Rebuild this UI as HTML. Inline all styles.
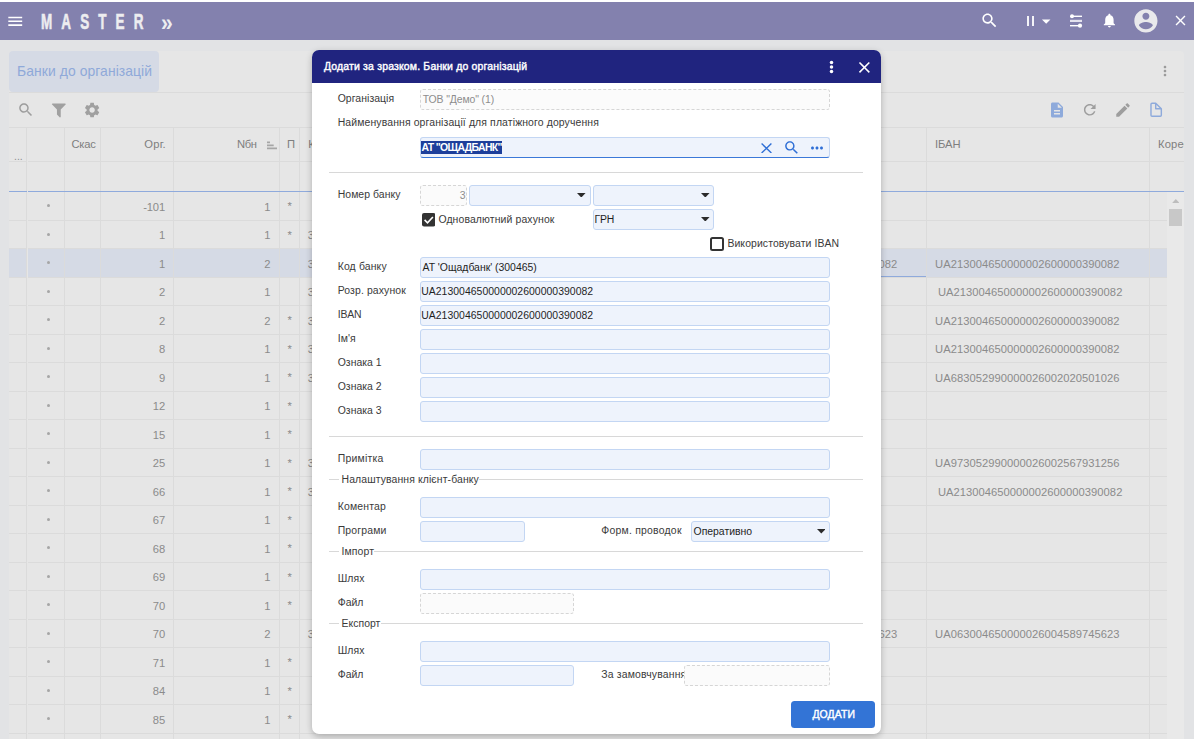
<!DOCTYPE html>
<html lang="uk"><head><meta charset="utf-8"><title>Банки до організацій</title>
<style>
html,body{margin:0;padding:0}
body{width:1194px;height:739px;overflow:hidden;position:relative;background:#e2e3e5;font-family:"Liberation Sans", sans-serif;}

.f{position:absolute;box-sizing:border-box;background:#eef3fc;border:1px solid #c3d6f3;border-radius:3px}
.ro{position:absolute;box-sizing:border-box;background:#fbfbfb;border:1px dashed #d6d6d6;border-radius:3px}
.hl{position:absolute;height:1px;background:#dbdbdb}
.vl{position:absolute;width:1px;background:#dbdbdb}

</style></head>
<body>
<div style="position:absolute;left:0.00px;top:0.00px;width:1194.00px;height:2.00px;background:#fff"></div>
<div style="position:absolute;left:0.00px;top:2.00px;width:1194.00px;height:38.00px;background:#8381ae"></div>
<svg style="position:absolute;left:5.75px;top:12.05px" width="18.50" height="18.50" viewBox="0 0 24 24"><path fill="#fff" d="M3 18h18v-2H3v2zm0-5h18v-2H3v2zm0-7v2h18V6H3z"/></svg>
<div style="position:absolute;top:5.85px;font-size:22.5px;line-height:31.5px;height:31.5px;color:#ededf0;white-space:pre;font-weight:700;left:41.10px;transform-origin:0 50%;transform:scaleX(.6);letter-spacing:15.14px;-webkit-text-stroke:.6px #ededf0;">MASTER</div>
<div style="position:absolute;top:5.60px;font-size:24px;line-height:33.6px;height:33.6px;color:#ededf0;white-space:pre;font-weight:700;left:161.20px;transform-origin:0 50%;transform:scaleX(.88);">»</div>
<svg style="position:absolute;left:979.70px;top:11.10px" width="19.00" height="19.00" viewBox="0 0 24 24"><path fill="#fff" d="M15.5 14h-.79l-.28-.27C15.41 12.59 16 11.11 16 9.5 16 5.91 13.09 3 9.5 3S3 5.91 3 9.5 5.91 16 9.5 16c1.61 0 3.09-.59 4.23-1.57l.27.28v.79l5 4.99L20.49 19l-4.99-5zm-6 0C7.01 14 5 11.99 5 9.5S7.01 5 9.5 5 14 7.01 14 9.5 11.99 14 9.5 14z"/></svg>
<div style="position:absolute;left:1026.50px;top:16.00px;width:2.50px;height:10.00px;background:#f4f4f8"></div>
<div style="position:absolute;left:1031.80px;top:16.00px;width:2.50px;height:10.00px;background:#f4f4f8"></div>
<svg style="position:absolute;left:1035.80px;top:11.30px" width="20.40" height="20.40" viewBox="0 0 24 24"><path fill="#fff" d="M7 10l5 5 5-5z"/></svg>
<svg style="position:absolute;left:1069px;top:13px" width="15" height="16" viewBox="0 0 15 16"><path fill="#fff" d="M3 2.6h10v1.4H3z"/><path fill="#e3e2ee" d="M1 6.8h12v2.2H1z"/><path fill="#fff" d="M1 12h10v1.4H1z"/><circle cx="3" cy="3.3" r="2" fill="#fff"/><circle cx="11" cy="12.7" r="2.1" fill="#fff"/></svg>
<svg style="position:absolute;left:1101.00px;top:11.90px" width="16.80" height="16.80" viewBox="0 0 24 24"><path fill="#fff" d="M12 22c1.1 0 2-.9 2-2h-4c0 1.1.89 2 2 2zm6-6v-5c0-3.07-1.64-5.64-4.5-6.32V4c0-.83-.67-1.5-1.5-1.5s-1.5.67-1.5 1.5v.68C7.63 5.36 6 7.92 6 11v5l-2 2v1h16v-1l-2-2z"/></svg>
<svg style="position:absolute;left:1131.60px;top:6.50px" width="27.80" height="27.80" viewBox="0 0 24 24"><path fill="#e9e9ec" d="M12 2C6.48 2 2 6.48 2 12s4.48 10 10 10 10-4.48 10-10S17.52 2 12 2zm0 3c1.66 0 3 1.34 3 3s-1.34 3-3 3-3-1.34-3-3 1.34-3 3-3zm0 14.2c-2.5 0-4.71-1.28-6-3.22.03-1.99 4-3.08 6-3.08 1.99 0 5.97 1.09 6 3.08-1.29 1.94-3.5 3.22-6 3.22z"/></svg>
<svg style="position:absolute;left:1171.50px;top:11.60px" width="17.00" height="17.00" viewBox="0 0 24 24"><path fill="#fff" d="M19 6.41L17.59 5 12 10.59 6.41 5 5 6.41 10.59 12 5 17.59 6.41 19 12 13.41 17.59 19 19 17.59 13.41 12z"/></svg>
<div style="position:absolute;left:9.00px;top:51.00px;width:1175.00px;height:688.00px;background:#e6e6e6;border-radius:4px 4px 0 0"></div>
<div style="position:absolute;left:9.00px;top:51.00px;width:149.70px;height:40.70px;background:#d5dae5;border-radius:4px"></div>
<div style="position:absolute;top:61.77px;font-size:13.9px;line-height:19.46px;height:19.46px;color:#8fa9d9;white-space:pre;letter-spacing:0.075px;left:17.10px;">Банки до організацій</div>
<svg style="position:absolute;left:1157.00px;top:63.00px" width="16.00" height="16.00" viewBox="0 0 24 24"><path fill="#9a9a9a" d="M12 8c1.1 0 2-.9 2-2s-.9-2-2-2-2 .9-2 2 .9 2 2 2zm0 2c-1.1 0-2 .9-2 2s.9 2 2 2 2-.9 2-2-.9-2-2-2zm0 6c-1.1 0-2 .9-2 2s.9 2 2 2 2-.9 2-2-.9-2-2-2z"/></svg>
<div class="hl" style="left:9px;top:91.6px;width:1175px"></div>
<svg style="position:absolute;left:16.90px;top:100.70px" width="17.60" height="17.60" viewBox="0 0 24 24"><path fill="#9e9e9e" d="M15.5 14h-.79l-.28-.27C15.41 12.59 16 11.11 16 9.5 16 5.91 13.09 3 9.5 3S3 5.91 3 9.5 5.91 16 9.5 16c1.61 0 3.09-.59 4.23-1.57l.27.28v.79l5 4.99L20.49 19l-4.99-5zm-6 0C7.01 14 5 11.99 5 9.5S7.01 5 9.5 5 14 7.01 14 9.5 11.99 14 9.5 14z"/></svg>
<svg style="position:absolute;left:50.1px;top:100.6px" width="17.7" height="17.7" viewBox="0 0 1792 1792"><path fill="#a0a0a0" d="M1595 295q17 41-14 70l-493 493v742q0 42-39 59-13 5-25 5-27 0-45-19l-256-256q-19-19-19-45v-486l-493-493q-31-29-14-70 17-39 59-39h1280q42 0 59 39z"/></svg>
<svg style="position:absolute;left:82.75px;top:100.80px" width="18.20" height="18.20" viewBox="0 0 24 24"><path fill="#a0a0a0" d="M19.14 12.94c.04-.3.06-.61.06-.94 0-.32-.02-.64-.07-.94l2.03-1.58c.18-.14.23-.41.12-.61l-1.92-3.32c-.12-.22-.37-.29-.59-.22l-2.39.96c-.5-.38-1.03-.7-1.62-.94l-.36-2.54c-.04-.24-.24-.41-.48-.41h-3.84c-.24 0-.43.17-.47.41l-.36 2.54c-.59.24-1.13.57-1.62.94l-2.39-.96c-.22-.08-.47 0-.59.22L2.74 8.87c-.12.21-.08.47.12.61l2.03 1.58c-.05.3-.09.63-.09.94s.02.64.07.94l-2.03 1.58c-.18.14-.23.41-.12.61l1.92 3.32c.12.22.37.29.59.22l2.39-.96c.5.38 1.03.7 1.62.94l.36 2.54c.05.24.24.41.48.41h3.84c.24 0 .44-.17.47-.41l.36-2.54c.59-.24 1.13-.56 1.62-.94l2.39.96c.22.08.47 0 .59-.22l1.92-3.32c.12-.22.07-.47-.12-.61l-2.01-1.58zM12 15.6c-1.98 0-3.6-1.62-3.6-3.6s1.62-3.6 3.6-3.6 3.6 1.62 3.6 3.6-1.62 3.6-3.6 3.6z"/></svg>
<svg style="position:absolute;left:1048.00px;top:101.00px" width="18.00" height="18.00" viewBox="0 0 24 24"><path fill="#8eaadb" d="M14 2H6c-1.1 0-1.99.9-1.99 2L4 20c0 1.1.89 2 1.99 2H18c1.1 0 2-.9 2-2V8l-6-6zm2 16H8v-2h8v2zm0-4H8v-2h8v2zm-3-5V3.5L18.5 9H13z"/></svg>
<svg style="position:absolute;left:1081.25px;top:101.25px" width="17.50" height="17.50" viewBox="0 0 24 24"><path fill="#9e9e9e" d="M17.65 6.35C16.2 4.9 14.21 4 12 4c-4.42 0-7.99 3.58-7.99 8s3.57 8 7.99 8c3.73 0 6.84-2.55 7.73-6h-2.08c-.82 2.33-3.04 4-5.65 4-3.31 0-6-2.69-6-6s2.69-6 6-6c1.66 0 3.14.69 4.22 1.78L13 11h7V4l-2.35 2.35z"/></svg>
<svg style="position:absolute;left:1114.00px;top:101.00px" width="18.00" height="18.00" viewBox="0 0 24 24"><path fill="#9e9e9e" d="M3 17.25V21h3.75L17.81 9.94l-3.75-3.75L3 17.25zM20.71 7.04c.39-.39.39-1.02 0-1.41l-2.34-2.34c-.39-.39-1.02-.39-1.41 0l-1.83 1.83 3.75 3.75 1.83-1.83z"/></svg>
<svg style="position:absolute;left:1147px;top:101px" width="18" height="18" viewBox="0 0 24 24" fill="none" stroke="#8eaadb" stroke-width="1.9" stroke-linejoin="round"><path d="M11.600 2.900H6.700a1.400 1.400 0 0 0-1.400 1.400v14.700a1.400 1.400 0 0 0 1.400 1.400h11a1.400 1.400 0 0 0 1.400-1.400V10.300zM11.600 2.900v7.400h7.500"/></svg>
<div class="hl" style="left:9px;top:127px;width:1175px"></div>
<div class="hl" style="left:9px;top:161px;width:1175px"></div>
<div style="position:absolute;left:9.00px;top:248.00px;width:1157.50px;height:29.00px;background:#d5dae5"></div>
<div class="hl" style="left:9px;top:219.90px;width:1157.5px"></div>
<div style="position:absolute;left:46.90px;top:204.00px;width:3.20px;height:3.20px;background:#a6a6a6;border-radius:50%"></div>
<div style="position:absolute;top:199.86px;font-size:11.2px;line-height:15.68px;height:15.68px;color:#8b8b8b;white-space:pre;letter-spacing:-0.109px;right:1028.91px;">-101</div>
<div style="position:absolute;top:199.86px;font-size:11.2px;line-height:15.68px;height:15.68px;color:#8b8b8b;white-space:pre;right:923.60px;">1</div>
<div style="position:absolute;top:199.46px;font-size:11.2px;line-height:15.68px;height:15.68px;color:#8b8b8b;white-space:pre;left:287.40px;">*</div>
<div class="hl" style="left:9px;top:248.40px;width:1157.5px"></div>
<div style="position:absolute;left:46.90px;top:232.50px;width:3.20px;height:3.20px;background:#a6a6a6;border-radius:50%"></div>
<div style="position:absolute;top:228.36px;font-size:11.2px;line-height:15.68px;height:15.68px;color:#8b8b8b;white-space:pre;right:1028.80px;">1</div>
<div style="position:absolute;top:228.36px;font-size:11.2px;line-height:15.68px;height:15.68px;color:#8b8b8b;white-space:pre;right:923.60px;">1</div>
<div style="position:absolute;top:227.96px;font-size:11.2px;line-height:15.68px;height:15.68px;color:#8b8b8b;white-space:pre;left:287.40px;">*</div>
<div style="position:absolute;top:228.36px;font-size:11.2px;line-height:15.68px;height:15.68px;color:#8b8b8b;white-space:pre;letter-spacing:0.065px;left:307.80px;">300465</div>
<div class="hl" style="left:9px;top:276.90px;width:1157.5px"></div>
<div style="position:absolute;left:46.90px;top:261.00px;width:3.20px;height:3.20px;background:#a6a6a6;border-radius:50%"></div>
<div style="position:absolute;top:256.86px;font-size:11.2px;line-height:15.68px;height:15.68px;color:#8b8b8b;white-space:pre;right:1028.80px;">1</div>
<div style="position:absolute;top:256.86px;font-size:11.2px;line-height:15.68px;height:15.68px;color:#8b8b8b;white-space:pre;right:923.60px;">2</div>
<div style="position:absolute;top:256.86px;font-size:11.2px;line-height:15.68px;height:15.68px;color:#8b8b8b;white-space:pre;letter-spacing:0.065px;left:307.80px;">300465</div>
<div style="position:absolute;top:256.86px;font-size:11.2px;line-height:15.68px;height:15.68px;color:#8b8b8b;white-space:pre;letter-spacing:0.033px;left:935.10px;">UA213004650000002600000390082</div>
<div style="position:absolute;top:256.86px;font-size:11.2px;line-height:15.68px;height:15.68px;color:#8b8b8b;white-space:pre;letter-spacing:0.065px;right:296.73px;">213004650000002600000390082</div>
<div class="hl" style="left:9px;top:305.40px;width:1157.5px"></div>
<div style="position:absolute;left:46.90px;top:289.50px;width:3.20px;height:3.20px;background:#a6a6a6;border-radius:50%"></div>
<div style="position:absolute;top:285.36px;font-size:11.2px;line-height:15.68px;height:15.68px;color:#8b8b8b;white-space:pre;right:1028.80px;">2</div>
<div style="position:absolute;top:285.36px;font-size:11.2px;line-height:15.68px;height:15.68px;color:#8b8b8b;white-space:pre;right:923.60px;">1</div>
<div style="position:absolute;top:285.36px;font-size:11.2px;line-height:15.68px;height:15.68px;color:#8b8b8b;white-space:pre;letter-spacing:0.065px;left:307.80px;">300465</div>
<div style="position:absolute;top:285.36px;font-size:11.2px;line-height:15.68px;height:15.68px;color:#8b8b8b;white-space:pre;letter-spacing:0.033px;left:937.90px;">UA213004650000002600000390082</div>
<div class="hl" style="left:9px;top:333.90px;width:1157.5px"></div>
<div style="position:absolute;left:46.90px;top:318.00px;width:3.20px;height:3.20px;background:#a6a6a6;border-radius:50%"></div>
<div style="position:absolute;top:313.86px;font-size:11.2px;line-height:15.68px;height:15.68px;color:#8b8b8b;white-space:pre;right:1028.80px;">2</div>
<div style="position:absolute;top:313.86px;font-size:11.2px;line-height:15.68px;height:15.68px;color:#8b8b8b;white-space:pre;right:923.60px;">2</div>
<div style="position:absolute;top:313.46px;font-size:11.2px;line-height:15.68px;height:15.68px;color:#8b8b8b;white-space:pre;left:287.40px;">*</div>
<div style="position:absolute;top:313.86px;font-size:11.2px;line-height:15.68px;height:15.68px;color:#8b8b8b;white-space:pre;letter-spacing:0.065px;left:307.80px;">300465</div>
<div style="position:absolute;top:313.86px;font-size:11.2px;line-height:15.68px;height:15.68px;color:#8b8b8b;white-space:pre;letter-spacing:0.033px;left:935.10px;">UA213004650000002600000390082</div>
<div class="hl" style="left:9px;top:362.40px;width:1157.5px"></div>
<div style="position:absolute;left:46.90px;top:346.50px;width:3.20px;height:3.20px;background:#a6a6a6;border-radius:50%"></div>
<div style="position:absolute;top:342.36px;font-size:11.2px;line-height:15.68px;height:15.68px;color:#8b8b8b;white-space:pre;right:1028.80px;">8</div>
<div style="position:absolute;top:342.36px;font-size:11.2px;line-height:15.68px;height:15.68px;color:#8b8b8b;white-space:pre;right:923.60px;">1</div>
<div style="position:absolute;top:341.96px;font-size:11.2px;line-height:15.68px;height:15.68px;color:#8b8b8b;white-space:pre;left:287.40px;">*</div>
<div style="position:absolute;top:342.36px;font-size:11.2px;line-height:15.68px;height:15.68px;color:#8b8b8b;white-space:pre;letter-spacing:0.065px;left:307.80px;">300465</div>
<div style="position:absolute;top:342.36px;font-size:11.2px;line-height:15.68px;height:15.68px;color:#8b8b8b;white-space:pre;letter-spacing:0.033px;left:935.10px;">UA213004650000002600000390082</div>
<div class="hl" style="left:9px;top:390.90px;width:1157.5px"></div>
<div style="position:absolute;left:46.90px;top:375.00px;width:3.20px;height:3.20px;background:#a6a6a6;border-radius:50%"></div>
<div style="position:absolute;top:370.86px;font-size:11.2px;line-height:15.68px;height:15.68px;color:#8b8b8b;white-space:pre;right:1028.80px;">9</div>
<div style="position:absolute;top:370.86px;font-size:11.2px;line-height:15.68px;height:15.68px;color:#8b8b8b;white-space:pre;right:923.60px;">1</div>
<div style="position:absolute;top:370.46px;font-size:11.2px;line-height:15.68px;height:15.68px;color:#8b8b8b;white-space:pre;left:287.40px;">*</div>
<div style="position:absolute;top:370.86px;font-size:11.2px;line-height:15.68px;height:15.68px;color:#8b8b8b;white-space:pre;letter-spacing:0.065px;left:307.80px;">305299</div>
<div style="position:absolute;top:370.86px;font-size:11.2px;line-height:15.68px;height:15.68px;color:#8b8b8b;white-space:pre;letter-spacing:0.033px;left:935.10px;">UA683052990000026002020501026</div>
<div class="hl" style="left:9px;top:419.40px;width:1157.5px"></div>
<div style="position:absolute;left:46.90px;top:403.50px;width:3.20px;height:3.20px;background:#a6a6a6;border-radius:50%"></div>
<div style="position:absolute;top:399.36px;font-size:11.2px;line-height:15.68px;height:15.68px;color:#8b8b8b;white-space:pre;letter-spacing:0.062px;right:1028.74px;">12</div>
<div style="position:absolute;top:399.36px;font-size:11.2px;line-height:15.68px;height:15.68px;color:#8b8b8b;white-space:pre;right:923.60px;">1</div>
<div style="position:absolute;top:398.96px;font-size:11.2px;line-height:15.68px;height:15.68px;color:#8b8b8b;white-space:pre;left:287.40px;">*</div>
<div class="hl" style="left:9px;top:447.90px;width:1157.5px"></div>
<div style="position:absolute;left:46.90px;top:432.00px;width:3.20px;height:3.20px;background:#a6a6a6;border-radius:50%"></div>
<div style="position:absolute;top:427.86px;font-size:11.2px;line-height:15.68px;height:15.68px;color:#8b8b8b;white-space:pre;letter-spacing:0.062px;right:1028.74px;">15</div>
<div style="position:absolute;top:427.86px;font-size:11.2px;line-height:15.68px;height:15.68px;color:#8b8b8b;white-space:pre;right:923.60px;">1</div>
<div style="position:absolute;top:427.46px;font-size:11.2px;line-height:15.68px;height:15.68px;color:#8b8b8b;white-space:pre;left:287.40px;">*</div>
<div class="hl" style="left:9px;top:476.40px;width:1157.5px"></div>
<div style="position:absolute;left:46.90px;top:460.50px;width:3.20px;height:3.20px;background:#a6a6a6;border-radius:50%"></div>
<div style="position:absolute;top:456.36px;font-size:11.2px;line-height:15.68px;height:15.68px;color:#8b8b8b;white-space:pre;letter-spacing:0.062px;right:1028.74px;">25</div>
<div style="position:absolute;top:456.36px;font-size:11.2px;line-height:15.68px;height:15.68px;color:#8b8b8b;white-space:pre;right:923.60px;">1</div>
<div style="position:absolute;top:455.96px;font-size:11.2px;line-height:15.68px;height:15.68px;color:#8b8b8b;white-space:pre;left:287.40px;">*</div>
<div style="position:absolute;top:456.36px;font-size:11.2px;line-height:15.68px;height:15.68px;color:#8b8b8b;white-space:pre;letter-spacing:0.065px;left:307.80px;">305299</div>
<div style="position:absolute;top:456.36px;font-size:11.2px;line-height:15.68px;height:15.68px;color:#8b8b8b;white-space:pre;letter-spacing:0.033px;left:935.10px;">UA973052990000026002567931256</div>
<div class="hl" style="left:9px;top:504.90px;width:1157.5px"></div>
<div style="position:absolute;left:46.90px;top:489.00px;width:3.20px;height:3.20px;background:#a6a6a6;border-radius:50%"></div>
<div style="position:absolute;top:484.86px;font-size:11.2px;line-height:15.68px;height:15.68px;color:#8b8b8b;white-space:pre;letter-spacing:0.062px;right:1028.74px;">66</div>
<div style="position:absolute;top:484.86px;font-size:11.2px;line-height:15.68px;height:15.68px;color:#8b8b8b;white-space:pre;right:923.60px;">1</div>
<div style="position:absolute;top:484.46px;font-size:11.2px;line-height:15.68px;height:15.68px;color:#8b8b8b;white-space:pre;left:287.40px;">*</div>
<div style="position:absolute;top:484.86px;font-size:11.2px;line-height:15.68px;height:15.68px;color:#8b8b8b;white-space:pre;letter-spacing:0.065px;left:307.80px;">300465</div>
<div style="position:absolute;top:484.86px;font-size:11.2px;line-height:15.68px;height:15.68px;color:#8b8b8b;white-space:pre;letter-spacing:0.033px;left:937.90px;">UA213004650000002600000390082</div>
<div class="hl" style="left:9px;top:533.40px;width:1157.5px"></div>
<div style="position:absolute;left:46.90px;top:517.50px;width:3.20px;height:3.20px;background:#a6a6a6;border-radius:50%"></div>
<div style="position:absolute;top:513.36px;font-size:11.2px;line-height:15.68px;height:15.68px;color:#8b8b8b;white-space:pre;letter-spacing:0.062px;right:1028.74px;">67</div>
<div style="position:absolute;top:513.36px;font-size:11.2px;line-height:15.68px;height:15.68px;color:#8b8b8b;white-space:pre;right:923.60px;">1</div>
<div style="position:absolute;top:512.96px;font-size:11.2px;line-height:15.68px;height:15.68px;color:#8b8b8b;white-space:pre;left:287.40px;">*</div>
<div class="hl" style="left:9px;top:561.90px;width:1157.5px"></div>
<div style="position:absolute;left:46.90px;top:546.00px;width:3.20px;height:3.20px;background:#a6a6a6;border-radius:50%"></div>
<div style="position:absolute;top:541.86px;font-size:11.2px;line-height:15.68px;height:15.68px;color:#8b8b8b;white-space:pre;letter-spacing:0.062px;right:1028.74px;">68</div>
<div style="position:absolute;top:541.86px;font-size:11.2px;line-height:15.68px;height:15.68px;color:#8b8b8b;white-space:pre;right:923.60px;">1</div>
<div style="position:absolute;top:541.46px;font-size:11.2px;line-height:15.68px;height:15.68px;color:#8b8b8b;white-space:pre;left:287.40px;">*</div>
<div class="hl" style="left:9px;top:590.40px;width:1157.5px"></div>
<div style="position:absolute;left:46.90px;top:574.50px;width:3.20px;height:3.20px;background:#a6a6a6;border-radius:50%"></div>
<div style="position:absolute;top:570.36px;font-size:11.2px;line-height:15.68px;height:15.68px;color:#8b8b8b;white-space:pre;letter-spacing:0.062px;right:1028.74px;">69</div>
<div style="position:absolute;top:570.36px;font-size:11.2px;line-height:15.68px;height:15.68px;color:#8b8b8b;white-space:pre;right:923.60px;">1</div>
<div style="position:absolute;top:569.96px;font-size:11.2px;line-height:15.68px;height:15.68px;color:#8b8b8b;white-space:pre;left:287.40px;">*</div>
<div class="hl" style="left:9px;top:618.90px;width:1157.5px"></div>
<div style="position:absolute;left:46.90px;top:603.00px;width:3.20px;height:3.20px;background:#a6a6a6;border-radius:50%"></div>
<div style="position:absolute;top:598.86px;font-size:11.2px;line-height:15.68px;height:15.68px;color:#8b8b8b;white-space:pre;letter-spacing:0.062px;right:1028.74px;">70</div>
<div style="position:absolute;top:598.86px;font-size:11.2px;line-height:15.68px;height:15.68px;color:#8b8b8b;white-space:pre;right:923.60px;">1</div>
<div style="position:absolute;top:598.46px;font-size:11.2px;line-height:15.68px;height:15.68px;color:#8b8b8b;white-space:pre;left:287.40px;">*</div>
<div class="hl" style="left:9px;top:647.40px;width:1157.5px"></div>
<div style="position:absolute;left:46.90px;top:631.50px;width:3.20px;height:3.20px;background:#a6a6a6;border-radius:50%"></div>
<div style="position:absolute;top:627.36px;font-size:11.2px;line-height:15.68px;height:15.68px;color:#8b8b8b;white-space:pre;letter-spacing:0.062px;right:1028.74px;">70</div>
<div style="position:absolute;top:627.36px;font-size:11.2px;line-height:15.68px;height:15.68px;color:#8b8b8b;white-space:pre;right:923.60px;">2</div>
<div style="position:absolute;top:627.36px;font-size:11.2px;line-height:15.68px;height:15.68px;color:#8b8b8b;white-space:pre;letter-spacing:0.065px;left:307.80px;">300465</div>
<div style="position:absolute;top:627.36px;font-size:11.2px;line-height:15.68px;height:15.68px;color:#8b8b8b;white-space:pre;letter-spacing:0.033px;left:935.10px;">UA063004650000026004589745623</div>
<div style="position:absolute;top:627.36px;font-size:11.2px;line-height:15.68px;height:15.68px;color:#8b8b8b;white-space:pre;letter-spacing:0.065px;right:296.73px;">063004650000026004589745623</div>
<div class="hl" style="left:9px;top:675.90px;width:1157.5px"></div>
<div style="position:absolute;left:46.90px;top:660.00px;width:3.20px;height:3.20px;background:#a6a6a6;border-radius:50%"></div>
<div style="position:absolute;top:655.86px;font-size:11.2px;line-height:15.68px;height:15.68px;color:#8b8b8b;white-space:pre;letter-spacing:0.062px;right:1028.74px;">71</div>
<div style="position:absolute;top:655.86px;font-size:11.2px;line-height:15.68px;height:15.68px;color:#8b8b8b;white-space:pre;right:923.60px;">1</div>
<div style="position:absolute;top:655.46px;font-size:11.2px;line-height:15.68px;height:15.68px;color:#8b8b8b;white-space:pre;left:287.40px;">*</div>
<div class="hl" style="left:9px;top:704.40px;width:1157.5px"></div>
<div style="position:absolute;left:46.90px;top:688.50px;width:3.20px;height:3.20px;background:#a6a6a6;border-radius:50%"></div>
<div style="position:absolute;top:684.36px;font-size:11.2px;line-height:15.68px;height:15.68px;color:#8b8b8b;white-space:pre;letter-spacing:0.062px;right:1028.74px;">84</div>
<div style="position:absolute;top:684.36px;font-size:11.2px;line-height:15.68px;height:15.68px;color:#8b8b8b;white-space:pre;right:923.60px;">1</div>
<div style="position:absolute;top:683.96px;font-size:11.2px;line-height:15.68px;height:15.68px;color:#8b8b8b;white-space:pre;left:287.40px;">*</div>
<div class="hl" style="left:9px;top:732.90px;width:1157.5px"></div>
<div style="position:absolute;left:46.90px;top:717.00px;width:3.20px;height:3.20px;background:#a6a6a6;border-radius:50%"></div>
<div style="position:absolute;top:712.86px;font-size:11.2px;line-height:15.68px;height:15.68px;color:#8b8b8b;white-space:pre;letter-spacing:0.062px;right:1028.74px;">85</div>
<div style="position:absolute;top:712.86px;font-size:11.2px;line-height:15.68px;height:15.68px;color:#8b8b8b;white-space:pre;right:923.60px;">1</div>
<div style="position:absolute;top:712.46px;font-size:11.2px;line-height:15.68px;height:15.68px;color:#8b8b8b;white-space:pre;left:287.40px;">*</div>
<div class="hl" style="left:9px;top:761.40px;width:1157.5px"></div>
<div style="position:absolute;left:46.90px;top:745.50px;width:3.20px;height:3.20px;background:#a6a6a6;border-radius:50%"></div>
<div style="position:absolute;top:741.36px;font-size:11.2px;line-height:15.68px;height:15.68px;color:#8b8b8b;white-space:pre;letter-spacing:0.062px;right:1028.74px;">86</div>
<div style="position:absolute;top:741.36px;font-size:11.2px;line-height:15.68px;height:15.68px;color:#8b8b8b;white-space:pre;right:923.60px;">1</div>
<div style="position:absolute;top:740.96px;font-size:11.2px;line-height:15.68px;height:15.68px;color:#8b8b8b;white-space:pre;left:287.40px;">*</div>
<div class="vl" style="left:26px;top:127.5px;height:612px"></div>
<div class="vl" style="left:64px;top:127.5px;height:612px"></div>
<div class="vl" style="left:100px;top:127.5px;height:612px"></div>
<div class="vl" style="left:173px;top:127.5px;height:612px"></div>
<div class="vl" style="left:279px;top:127.5px;height:612px"></div>
<div class="vl" style="left:299px;top:127.5px;height:612px"></div>
<div class="vl" style="left:926px;top:127.5px;height:612px"></div>
<div class="vl" style="left:1149px;top:127.5px;height:612px"></div>
<div style="position:absolute;left:27.00px;top:127.70px;width:1.00px;height:612.00px;background:#e6e6e6"></div>
<div style="position:absolute;left:9.00px;top:190.90px;width:18.00px;height:1.20px;background:#8faadc"></div>
<div style="position:absolute;left:28.00px;top:190.90px;width:1156.00px;height:1.20px;background:#8faadc"></div>
<div style="position:absolute;left:705.00px;top:276.00px;width:221.00px;height:1.00px;background:#8faadc"></div>
<div style="position:absolute;top:149.25px;font-size:10.5px;line-height:14.7px;height:14.7px;color:#8e8e8e;white-space:pre;letter-spacing:-0.022px;left:14.00px;">...</div>
<div style="position:absolute;top:136.86px;font-size:11.2px;line-height:15.68px;height:15.68px;color:#7e7e7e;white-space:pre;letter-spacing:-0.212px;left:71.40px;">Скас</div>
<div style="position:absolute;top:136.86px;font-size:11.2px;line-height:15.68px;height:15.68px;color:#7e7e7e;white-space:pre;letter-spacing:0.223px;right:1028.08px;">Орг.</div>
<div style="position:absolute;top:136.86px;font-size:11.2px;line-height:15.68px;height:15.68px;color:#7e7e7e;white-space:pre;letter-spacing:-0.424px;right:937.52px;">Nбн</div>
<svg style="position:absolute;left:266.7px;top:140.9px" width="10.5" height="9" viewBox="0 0 10.5 9"><path fill="#a6a6a6" d="M0 .6h3v1.7H0zM0 3.6h6.7v1.7H0zM0 6.6h10v1.7H0z"/></svg>
<div style="position:absolute;top:136.86px;font-size:11.2px;line-height:15.68px;height:15.68px;color:#7e7e7e;white-space:pre;left:286.90px;">П</div>
<div style="position:absolute;top:136.86px;font-size:11.2px;line-height:15.68px;height:15.68px;color:#7e7e7e;white-space:pre;letter-spacing:0.148px;left:308.30px;">Код банку</div>
<div style="position:absolute;top:136.86px;font-size:11.2px;line-height:15.68px;height:15.68px;color:#7e7e7e;white-space:pre;letter-spacing:-0.094px;left:935.00px;">ІБАН</div>
<div style="position:absolute;top:136.86px;font-size:11.2px;line-height:15.68px;height:15.68px;color:#7e7e7e;white-space:pre;letter-spacing:0.144px;left:1158.00px;width:26px;overflow:hidden;">Корес</div>
<div style="position:absolute;left:1167.00px;top:192.00px;width:17.00px;height:547.00px;background:#e9e9e9"></div>
<svg style="position:absolute;left:1171.8px;top:199px" width="7.6" height="4.2" viewBox="0 0 9 5"><path fill="#bdbdbd" d="M0 5L4.5 0 9 5z"/></svg>
<div style="position:absolute;left:1169.00px;top:209.00px;width:13.00px;height:17.00px;background:#c8c8c8"></div>
<div style="position:absolute;left:312.00px;top:50.00px;width:569.00px;height:683.50px;background:#fff;border-radius:7px;box-shadow:0 2px 7px rgba(0,0,0,.2),0 5px 8px -3px rgba(0,0,0,.1)"></div>
<div style="position:absolute;left:312.00px;top:50.00px;width:569.00px;height:33.00px;background:#20247f;border-radius:7px 7px 0 0"></div>
<div style="position:absolute;top:59.98px;font-size:10.45px;line-height:14.63px;height:14.63px;color:#fff;white-space:pre;letter-spacing:0.185px;left:323.90px;-webkit-text-stroke:.4px #fff;">Додати за зразком. Банки до організацій</div>
<svg style="position:absolute;left:829px;top:60px" width="5" height="14" viewBox="0 0 5 14" fill="#fff"><circle cx="2.5" cy="2.5" r="1.75"/><circle cx="2.5" cy="7" r="1.75"/><circle cx="2.5" cy="11.5" r="1.75"/></svg>
<svg style="position:absolute;left:855.00px;top:57.60px" width="18.80" height="18.80" viewBox="0 0 24 24"><path fill="#fff" d="M19 6.41L17.59 5 12 10.59 6.41 5 5 6.41 10.59 12 5 17.59 6.41 19 12 13.41 17.59 19 19 17.59 13.41 12z"/></svg>
<div style="position:absolute;top:92.08px;font-size:10.45px;line-height:14.63px;height:14.63px;color:#3a3a3a;white-space:pre;letter-spacing:0.051px;left:337.70px;">Організація</div>
<div class="ro" style="left:420.00px;top:89.00px;width:410.00px;height:21px;"></div>
<div style="position:absolute;top:93.08px;font-size:10.45px;line-height:14.63px;height:14.63px;color:#8d8d8d;white-space:pre;letter-spacing:-0.115px;left:422.80px;">ТОВ "Демо" (1)</div>
<div style="position:absolute;top:116.19px;font-size:10.45px;line-height:14.63px;height:14.63px;color:#3a3a3a;white-space:pre;letter-spacing:0.120px;left:337.70px;">Найменування організації для платіжного доручення</div>
<div class="f" style="left:420.00px;top:137.00px;width:410.00px;height:21px;border-bottom:1.5px solid #3b78d8;"></div>
<div style="position:absolute;left:421.00px;top:140.50px;width:81.30px;height:13.20px;background:#1d3f9b"></div>
<div style="position:absolute;top:141.09px;font-size:10.45px;line-height:14.63px;height:14.63px;color:#fff;white-space:pre;font-weight:700;letter-spacing:-0.651px;left:421.40px;">АТ "ОЩАДБАНК"</div>
<svg style="position:absolute;left:761px;top:142.8px" width="11" height="10.6" viewBox="0 0 11 10.6" fill="none" stroke="#2f6fd6" stroke-width="1.4"><path d="M.6.6L10.4 10M10.4.6L.6 10"/></svg>
<svg style="position:absolute;left:782.70px;top:139.10px" width="17.40" height="17.40" viewBox="0 0 24 24"><path fill="#2f6fd6" d="M15.5 14h-.79l-.28-.27C15.41 12.59 16 11.11 16 9.5 16 5.91 13.09 3 9.5 3S3 5.91 3 9.5 5.91 16 9.5 16c1.61 0 3.09-.59 4.23-1.57l.27.28v.79l5 4.99L20.49 19l-4.99-5zm-6 0C7.01 14 5 11.99 5 9.5S7.01 5 9.5 5 14 7.01 14 9.5 11.99 14 9.5 14z"/></svg>
<svg style="position:absolute;left:807.60px;top:138.80px" width="18.00" height="18.00" viewBox="0 0 24 24"><path fill="#2f6fd6" d="M6 10c-1.1 0-2 .9-2 2s.9 2 2 2 2-.9 2-2-.9-2-2-2zm12 0c-1.1 0-2 .9-2 2s.9 2 2 2 2-.9 2-2-.9-2-2-2zm-6 0c-1.1 0-2 .9-2 2s.9 2 2 2 2-.9 2-2-.9-2-2-2z"/></svg>
<div class="hl" style="left:328.9px;top:172px;width:534px;background:#d8d8d8"></div>
<div style="position:absolute;top:188.28px;font-size:10.45px;line-height:14.63px;height:14.63px;color:#3a3a3a;white-space:pre;letter-spacing:0.050px;left:337.70px;">Номер банку</div>
<div class="ro" style="left:420.00px;top:185.00px;width:47.00px;height:21px;"></div>
<div style="position:absolute;top:189.09px;font-size:10.45px;line-height:14.63px;height:14.63px;color:#8d8d8d;white-space:pre;right:728.50px;">3</div>
<div class="f" style="left:469.00px;top:185.00px;width:122.00px;height:21px;"></div>
<div class="f" style="left:593.00px;top:185.00px;width:121.00px;height:21px;"></div>
<svg style="position:absolute;left:577.10px;top:192.70px" width="8.6" height="4.6" viewBox="0 0 8.6 4.6"><path fill="#2b2b2b" d="M0 0h8.6L4.3 4.6z"/></svg>
<svg style="position:absolute;left:701.20px;top:192.70px" width="8.6" height="4.6" viewBox="0 0 8.6 4.6"><path fill="#2b2b2b" d="M0 0h8.6L4.3 4.6z"/></svg>
<svg style="position:absolute;left:421.9px;top:213.2px" width="13.4" height="13.4" viewBox="0 0 13.4 13.4"><rect width="13.4" height="13.4" rx="2" fill="#333"/><path d="M2.6 6.9l2.9 2.9 5.4-5.8" fill="none" stroke="#fff" stroke-width="1.6"/></svg>
<div style="position:absolute;top:213.19px;font-size:10.45px;line-height:14.63px;height:14.63px;color:#3a3a3a;white-space:pre;letter-spacing:0.117px;left:438.40px;">Одновалютний рахунок</div>
<div class="f" style="left:593.00px;top:209.00px;width:121.00px;height:21px;"></div>
<div style="position:absolute;top:213.28px;font-size:10.45px;line-height:14.63px;height:14.63px;color:#1f1f1f;white-space:pre;letter-spacing:-0.285px;left:594.60px;">ГРН</div>
<svg style="position:absolute;left:701.20px;top:216.90px" width="8.6" height="4.6" viewBox="0 0 8.6 4.6"><path fill="#2b2b2b" d="M0 0h8.6L4.3 4.6z"/></svg>
<div style="position:absolute;left:710.40px;top:236.80px;width:13.60px;height:13.80px;box-sizing:border-box;border:2px solid #333;border-radius:2.5px;background:#fff"></div>
<div style="position:absolute;top:237.09px;font-size:10.45px;line-height:14.63px;height:14.63px;color:#3a3a3a;white-space:pre;letter-spacing:0.089px;left:727.40px;">Використовувати IBAN</div>
<div style="position:absolute;top:260.29px;font-size:10.45px;line-height:14.63px;height:14.63px;color:#3a3a3a;white-space:pre;letter-spacing:0.137px;left:337.70px;">Код банку</div>
<div class="f" style="left:420.00px;top:257.00px;width:410.00px;height:21px;"></div>
<div style="position:absolute;top:284.29px;font-size:10.45px;line-height:14.63px;height:14.63px;color:#3a3a3a;white-space:pre;letter-spacing:0.114px;left:337.70px;">Розр. рахунок</div>
<div class="f" style="left:420.00px;top:281.00px;width:410.00px;height:21px;"></div>
<div style="position:absolute;top:308.29px;font-size:10.45px;line-height:14.63px;height:14.63px;color:#3a3a3a;white-space:pre;letter-spacing:-0.191px;left:337.70px;">IBAN</div>
<div class="f" style="left:420.00px;top:305.00px;width:410.00px;height:21px;"></div>
<div style="position:absolute;top:332.29px;font-size:10.45px;line-height:14.63px;height:14.63px;color:#3a3a3a;white-space:pre;letter-spacing:0.102px;left:337.70px;">Ім'я</div>
<div class="f" style="left:420.00px;top:329.00px;width:410.00px;height:21px;"></div>
<div style="position:absolute;top:356.29px;font-size:10.45px;line-height:14.63px;height:14.63px;color:#3a3a3a;white-space:pre;letter-spacing:0.021px;left:337.70px;">Ознака 1</div>
<div class="f" style="left:420.00px;top:353.00px;width:410.00px;height:21px;"></div>
<div style="position:absolute;top:380.29px;font-size:10.45px;line-height:14.63px;height:14.63px;color:#3a3a3a;white-space:pre;letter-spacing:0.021px;left:337.70px;">Ознака 2</div>
<div class="f" style="left:420.00px;top:377.00px;width:410.00px;height:21px;"></div>
<div style="position:absolute;top:404.29px;font-size:10.45px;line-height:14.63px;height:14.63px;color:#3a3a3a;white-space:pre;letter-spacing:0.021px;left:337.70px;">Ознака 3</div>
<div class="f" style="left:420.00px;top:401.00px;width:410.00px;height:21px;"></div>
<div style="position:absolute;top:261.29px;font-size:10.45px;line-height:14.63px;height:14.63px;color:#1f1f1f;white-space:pre;letter-spacing:-0.016px;left:422.50px;">АТ 'Ощадбанк' (300465)</div>
<div style="position:absolute;top:285.29px;font-size:10.45px;line-height:14.63px;height:14.63px;color:#1f1f1f;white-space:pre;letter-spacing:0.026px;left:421.20px;">UA213004650000002600000390082</div>
<div style="position:absolute;top:309.29px;font-size:10.45px;line-height:14.63px;height:14.63px;color:#1f1f1f;white-space:pre;letter-spacing:0.026px;left:421.20px;">UA213004650000002600000390082</div>
<div class="hl" style="left:328.9px;top:436px;width:534px;background:#d8d8d8"></div>
<div style="position:absolute;top:452.39px;font-size:10.45px;line-height:14.63px;height:14.63px;color:#3a3a3a;white-space:pre;letter-spacing:0.242px;left:337.70px;">Примітка</div>
<div class="f" style="left:420.00px;top:449.00px;width:410.00px;height:21px;"></div>
<div class="hl" style="left:328.9px;top:479px;width:534px;background:#d8d8d8"></div>
<div style="position:absolute;left:339.30px;top:474.00px;width:140.00px;height:11.00px;background:#fff"></div>
<div style="position:absolute;top:472.59px;font-size:10.45px;line-height:14.63px;height:14.63px;color:#3a3a3a;white-space:pre;letter-spacing:0.108px;left:341.50px;">Налаштування клієнт-банку</div>
<div style="position:absolute;top:500.39px;font-size:10.45px;line-height:14.63px;height:14.63px;color:#3a3a3a;white-space:pre;letter-spacing:0.174px;left:337.70px;">Коментар</div>
<div class="f" style="left:420.00px;top:497.00px;width:410.00px;height:21px;"></div>
<div style="position:absolute;top:524.38px;font-size:10.45px;line-height:14.63px;height:14.63px;color:#3a3a3a;white-space:pre;letter-spacing:0.176px;left:337.70px;">Програми</div>
<div class="f" style="left:420.00px;top:521.00px;width:105.00px;height:21px;"></div>
<div style="position:absolute;top:524.38px;font-size:10.45px;line-height:14.63px;height:14.63px;color:#3a3a3a;white-space:pre;letter-spacing:0.225px;left:601.30px;">Форм. проводок</div>
<div class="f" style="left:691.00px;top:521.00px;width:139.00px;height:21px;"></div>
<div style="position:absolute;top:525.28px;font-size:10.45px;line-height:14.63px;height:14.63px;color:#1f1f1f;white-space:pre;letter-spacing:-0.029px;left:693.60px;">Оперативно</div>
<svg style="position:absolute;left:816.90px;top:529.00px" width="8.6" height="4.6" viewBox="0 0 8.6 4.6"><path fill="#2b2b2b" d="M0 0h8.6L4.3 4.6z"/></svg>
<div class="hl" style="left:328.9px;top:551px;width:534px;background:#d8d8d8"></div>
<div style="position:absolute;left:339.30px;top:546.00px;width:35.20px;height:11.00px;background:#fff"></div>
<div style="position:absolute;top:544.58px;font-size:10.45px;line-height:14.63px;height:14.63px;color:#3a3a3a;white-space:pre;letter-spacing:0.118px;left:341.50px;">Імпорт</div>
<div style="position:absolute;top:572.38px;font-size:10.45px;line-height:14.63px;height:14.63px;color:#3a3a3a;white-space:pre;letter-spacing:0.082px;left:337.70px;">Шлях</div>
<div class="f" style="left:420.00px;top:569.00px;width:410.00px;height:21px;"></div>
<div style="position:absolute;top:596.38px;font-size:10.45px;line-height:14.63px;height:14.63px;color:#3a3a3a;white-space:pre;letter-spacing:0.031px;left:337.70px;">Файл</div>
<div class="ro" style="left:420.00px;top:593.00px;width:154.00px;height:21px;"></div>
<div class="hl" style="left:328.9px;top:623px;width:534px;background:#d8d8d8"></div>
<div style="position:absolute;left:339.30px;top:618.00px;width:41.50px;height:11.00px;background:#fff"></div>
<div style="position:absolute;top:616.58px;font-size:10.45px;line-height:14.63px;height:14.63px;color:#3a3a3a;white-space:pre;letter-spacing:0.030px;left:341.50px;">Експорт</div>
<div style="position:absolute;top:644.38px;font-size:10.45px;line-height:14.63px;height:14.63px;color:#3a3a3a;white-space:pre;letter-spacing:0.082px;left:337.70px;">Шлях</div>
<div class="f" style="left:420.00px;top:641.00px;width:410.00px;height:21px;"></div>
<div style="position:absolute;top:668.38px;font-size:10.45px;line-height:14.63px;height:14.63px;color:#3a3a3a;white-space:pre;letter-spacing:0.031px;left:337.70px;">Файл</div>
<div class="f" style="left:420.00px;top:665.00px;width:154.00px;height:21px;"></div>
<div style="position:absolute;top:668.38px;font-size:10.45px;line-height:14.63px;height:14.63px;color:#3a3a3a;white-space:pre;letter-spacing:0.160px;left:601.30px;width:83px;overflow:hidden;">За замовчування</div>
<div class="ro" style="left:684.00px;top:665.00px;width:146.00px;height:21px;"></div>
<div style="position:absolute;left:791.00px;top:701.00px;width:84.00px;height:27.00px;background:#3374d6;border-radius:3.5px"></div>
<div style="position:absolute;top:707.99px;font-size:10.45px;line-height:14.63px;height:14.63px;color:#fff;white-space:pre;letter-spacing:0.090px;left:812.40px;-webkit-text-stroke:.4px #fff;">ДОДАТИ</div>
</body></html>
